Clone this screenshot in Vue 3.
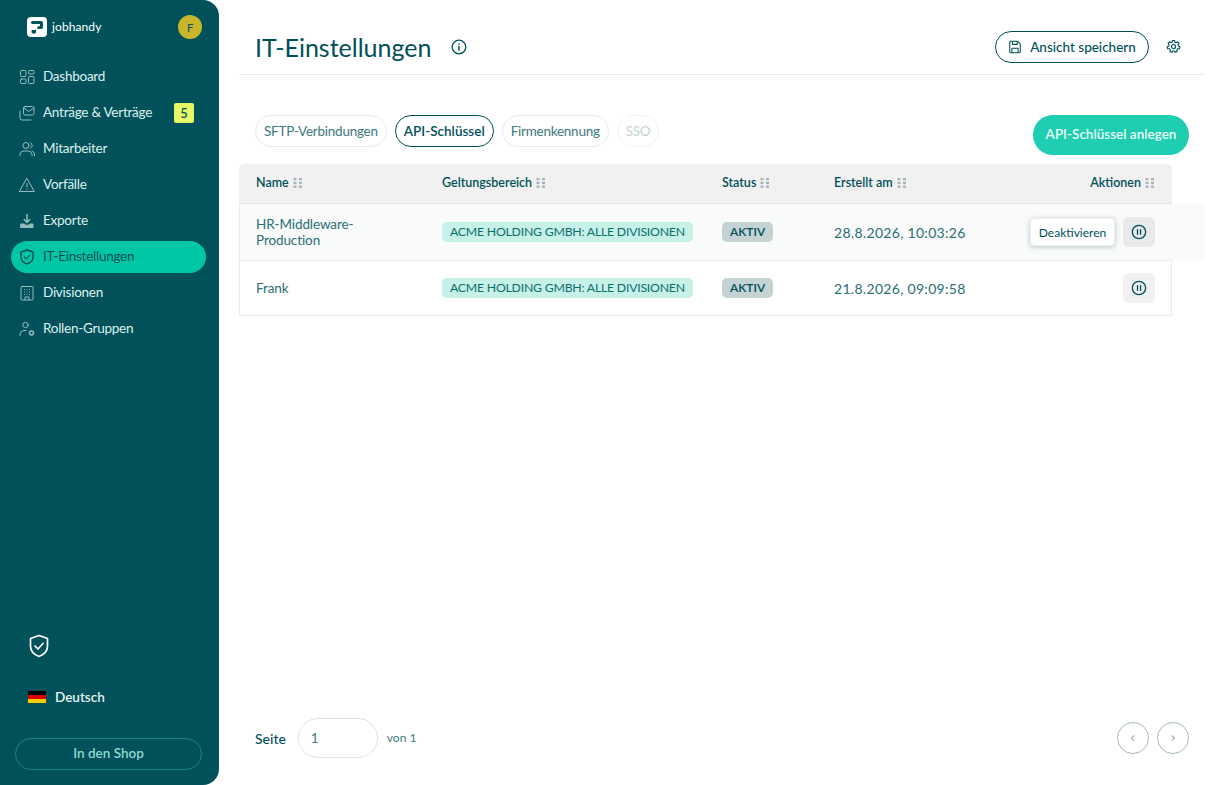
<script setup>
const nav = [
  { label: 'Dashboard', icon: 'dash' },
  { label: 'Anträge & Verträge', icon: 'mail', badge: '5' },
  { label: 'Mitarbeiter', icon: 'users' },
  { label: 'Vorfälle', icon: 'warn' },
  { label: 'Exporte', icon: 'export' },
  { label: 'IT-Einstellungen', icon: 'shield', active: true },
  { label: 'Divisionen', icon: 'building' },
  { label: 'Rollen-Gruppen', icon: 'role' },
]
const tabs = [
  { label: 'SFTP-Verbindungen' },
  { label: 'API-Schlüssel', active: true },
  { label: 'Firmenkennung' },
  { label: 'SSO', disabled: true },
]
const heads = [
  { label: 'Name' },
  { label: 'Geltungsbereich' },
  { label: 'Status' },
  { label: 'Erstellt am' },
  { label: 'Aktionen', right: true },
]
const rows = [
  { name: 'HR-Middleware-\nProduction', date: '28.8.2026, 10:03:26', hover: true },
  { name: 'Frank', date: '21.8.2026, 09:09:58', hover: false },
]
</script>

<template>
  <div class="app">
    <aside class="side">
      <div class="brand">
        <div class="logo-wrap">
          <svg class="logo" viewBox="0 0 20 20">
            <rect width="20" height="20" rx="4" fill="#fff" />
            <path d="M5.500 4H14a2 2 0 0 1 2 2v4a2 2 0 0 1-2 2h-3.500V9.300H13V7H5.500a1.500 1.500 0 0 1 0-3z" fill="#00515a" />
            <path d="M5.500 13H9v2a1.500 1.500 0 0 1-1.500 1.500H6A1.500 1.500 0 0 1 4.500 15v-1a1 1 0 0 1 1-1z" fill="#00515a" />
          </svg>
          <span class="logo-text">jobhandy</span>
        </div>
        <div class="avatar">F</div>
      </div>

      <nav class="nav">
        <a v-for="n in nav" :key="n.label" class="nav-item" :class="{ active: n.active }">
          <svg class="nav-ico" viewBox="0 0 16 16" fill="none" stroke="currentColor" stroke-width="1" stroke-linecap="round" stroke-linejoin="round">
            <template v-if="n.icon === 'dash'">
              <rect x="1.500" y="1.500" width="5.500" height="6" rx="1" />
              <rect x="9.500" y="1.500" width="5.500" height="3.500" rx="1" />
              <rect x="1.500" y="10" width="5.500" height="4.500" rx="1" />
              <rect x="9.500" y="7.500" width="5.500" height="7" rx="1" />
            </template>
            <template v-else-if="n.icon === 'mail'">
              <rect x="4.500" y="1.500" width="10.500" height="8.500" rx="1.500" />
              <path d="M4.800 3l5 3.500 5-3.500" />
              <path d="M1 6v7a2 2 0 0 0 2 2h9" />
            </template>
            <template v-else-if="n.icon === 'users'">
              <circle cx="7" cy="4.500" r="3" />
              <path d="M1 14.500v-1.500a4 4 0 0 1 4-3h4a4 4 0 0 1 4 3v1.500" />
              <path d="M11.500 1.800a3 3 0 0 1 0 5.400" />
              <path d="M13 10a3.500 3.500 0 0 1 2.500 3v1.500" />
            </template>
            <template v-else-if="n.icon === 'warn'">
              <path d="M8 1.500L15.300 14.500H.7z" />
              <path d="M8 6.500v3.500M8 12v.2" />
            </template>
            <template v-else-if="n.icon === 'export'">
              <path d="M8 1.500v7.500M5.200 6.500L8 9.500l2.800-3" stroke-width="1.500" />
              <path d="M2 11h3.500l1 1.200h3l1-1.200H14v3.500H2z" fill="currentColor" />
            </template>
            <template v-else-if="n.icon === 'shield'">
              <path d="M8 1l6 2v5c0 3.500-2.500 5.800-6 7-3.500-1.200-6-3.500-6-7V3z" stroke-width="1.400" />
              <path d="M5.500 8l1.800 1.800 3.300-3.400" stroke-width="1.200" />
            </template>
            <template v-else-if="n.icon === 'building'">
              <rect x="2" y="1.500" width="12" height="13.500" rx="1" />
              <path d="M5.500 4.500h.1M8 4.500h.1M10.500 4.500h.1M5.500 7h.1M8 7h.1M10.500 7h.1M5.500 9.500h.1M8 9.500h.1M10.500 9.500h.1M6 15v-3h4v3" />
            </template>
            <template v-else>
              <circle cx="6.500" cy="4" r="2.700" />
              <path d="M1 14.500V13a4 4 0 0 1 4-3.500h2" />
              <circle cx="12.500" cy="12" r="2" stroke-width="1.500" />
            </template>
          </svg>
          <span class="nav-label">{{ n.label }}</span>
          <span v-if="n.badge" class="nav-badge">{{ n.badge }}</span>
        </a>
      </nav>

      <div class="side-bottom">
        <svg class="trust" viewBox="0 0 20 24" fill="none" stroke="#fff" stroke-width="1.700" stroke-linejoin="round" stroke-linecap="round">
          <path d="M10 1.500l8.500 3v7.500c0 5-3.500 8.500-8.500 10.500C5 20.500 1.500 17 1.500 12V4.500z" />
          <path d="M6 12l3 3 5-5.500" />
        </svg>
        <div class="lang">
          <span class="flag"><i class="f1"></i><i class="f2"></i><i class="f3"></i></span>
          <span>Deutsch</span>
        </div>
        <button class="shop">In den Shop</button>
      </div>
    </aside>

    <main class="main">
      <header class="top">
        <div class="title-wrap">
          <h1>IT-Einstellungen</h1>
          <svg class="info" viewBox="0 0 16 16" fill="none" stroke="#00505a" stroke-width="1.300" stroke-linecap="round">
            <circle cx="8" cy="8" r="6.800" />
            <path d="M8 7.500v3.500M8 5v.2" stroke-width="1.500" />
          </svg>
        </div>
        <div class="top-actions">
          <button class="save">
            <svg viewBox="0 0 16 16" fill="none" stroke="#00505a" stroke-width="1.200" stroke-linejoin="round">
              <path d="M2 2.500A1 1 0 0 1 3 1.500h8l3 3V13.500a1 1 0 0 1-1 1H3a1 1 0 0 1-1-1z" />
              <path d="M5 1.500v3.500h5.500V1.500M4.500 14.500V9.500h7v5" />
            </svg>
            Ansicht speichern
          </button>
          <svg class="gear" viewBox="0 0 24 24" fill="none" stroke="#00505a" stroke-width="1.800" stroke-linejoin="round">
            <path d="M10.300 2.300h3.400l.6 2.800 1.700.8 2.500-1.400 2.300 2.600-1.600 2.300.5 1.900 2.500 1.100-.8 3.300-2.800-.1-1.200 1.500.5 2.800-3.100 1.400-1.700-2.200h-2l-1.700 2.200-3.100-1.400.5-2.800-1.200-1.500-2.800.1-.8-3.300 2.500-1.100.5-1.900-1.600-2.300 2.300-2.600 2.500 1.400 1.700-.8z" />
            <circle cx="12" cy="12" r="3.300" />
          </svg>
        </div>
      </header>

      <div class="toolbar">
        <div class="tabs">
          <button v-for="t in tabs" :key="t.label" class="tab" :class="{ on: t.active, off: t.disabled }">{{ t.label }}</button>
        </div>
        <button class="create">API-Schlüssel anlegen</button>
      </div>

      <div class="table">
        <div class="row head">
          <div v-for="h in heads" :key="h.label" class="th" :class="{ right: h.right }">
            {{ h.label }}
            <svg class="grip" viewBox="0 0 10 10" fill="#a9b5b7">
              <rect x="0.500" y="0" width="3" height="2.300" /><rect x="6" y="0" width="3" height="2.300" />
              <rect x="0.500" y="3.800" width="3" height="2.300" /><rect x="6" y="3.800" width="3" height="2.300" />
              <rect x="0.500" y="7.600" width="3" height="2.300" /><rect x="6" y="7.600" width="3" height="2.300" />
            </svg>
          </div>
        </div>
        <div v-for="r in rows" :key="r.name" class="row body" :class="{ hover: r.hover }">
          <div class="td name">{{ r.name }}</div>
          <div class="td cell"><span class="scope">ACME HOLDING GMBH: ALLE DIVISIONEN</span></div>
          <div class="td cell"><span class="status">AKTIV</span></div>
          <div class="td date">{{ r.date }}</div>
          <div class="td acts">
            <span v-if="r.hover" class="tip">Deaktivieren</span>
            <span class="pause" :class="{ pressed: r.hover }">
              <svg viewBox="0 0 18 18" fill="none" stroke="#00505a" stroke-width="1.500" stroke-linecap="round">
                <circle cx="9" cy="9" r="7.500" />
                <path d="M7.300 6.500v5M10.700 6.500v5" />
              </svg>
            </span>
          </div>
        </div>
      </div>

      <footer class="pager">
        <div class="page-left">
          <span class="seite">Seite</span>
          <div class="page-input">1</div>
          <span class="von">von 1</span>
        </div>
        <div class="page-right">
          <span class="round"><svg viewBox="0 0 10 10" fill="none" stroke="#a3b5b7" stroke-width="1.200"><path d="M6 2.500L3.500 5 6 7.500" /></svg></span>
          <span class="round"><svg viewBox="0 0 10 10" fill="none" stroke="#a3b5b7" stroke-width="1.200"><path d="M4 2.500L6.500 5 4 7.500" /></svg></span>
        </div>
      </footer>
    </main>
  </div>
</template>

<style scoped>
.app {
  display: flex;
  width: 1223px;
  height: 785px;
  overflow: hidden;
  background: #fff;
  color: #00505a;
  font-family: "Lato", "Liberation Sans", sans-serif;
}
.side {
  width: 219px;
  flex: none;
  background: #00515a;
  border-radius: 0 16px 16px 0;
  display: flex;
  flex-direction: column;
  color: #dff1ef;
}
.brand {
  display: flex;
  align-items: center;
  justify-content: space-between;
  padding: 15px 17px 0 27px;
  height: 24px;
  box-sizing: content-box;
}
.logo-wrap { display: flex; align-items: center; gap: 5px; }
.logo { width: 20px; height: 20px; }
.logo-text { color: #fff; font-size: 12px; letter-spacing: 0.1px; padding-bottom: 1px; }
.avatar {
  width: 24px;
  height: 24px;
  border-radius: 50%;
  background: #c9b52c;
  color: #00505a;
  font-size: 11px;
  display: flex;
  align-items: center;
  justify-content: center;
}
.nav {
  display: flex;
  flex-direction: column;
  gap: 4px;
  margin-top: 22px;
  padding-left: 11px;
  padding-right: 13px;
}
.nav-item {
  height: 32px;
  border-radius: 16px;
  display: flex;
  align-items: center;
  padding: 0 12px 0 8px;
  font-size: 13.500px;
  letter-spacing: -0.25px;
  position: relative;
}
.nav-ico { width: 16px; height: 16px; flex: none; color: #93bdbd; margin-right: 8px; }
.nav-item.active { background: #00c7a3; color: #00505a; }
.nav-item.active .nav-ico { color: #00505a; }
.nav-label { flex: 1; white-space: nowrap; padding-bottom: 2px; }
.nav-badge {
  width: 20px;
  height: 20px;
  background: #e8fb66;
  border-radius: 2px;
  color: #00505a;
  font-size: 13px;
  font-weight: 500;
  letter-spacing: 0;
  display: flex;
  align-items: center;
  justify-content: center;
}
.side-bottom {
  margin-top: auto;
  display: flex;
  flex-direction: column;
  padding: 0 17px 15px 15px;
}
.trust { width: 20px; height: 24px; margin-left: 14px; }
.lang {
  display: flex;
  align-items: center;
  gap: 9px;
  font-size: 13.500px;
  font-weight: 600;
  color: #e6f3f2;
  margin: 27px 0 0 13px;
  height: 24px;
}
.flag { width: 18px; height: 13px; display: flex; flex-direction: column; }
.flag i { flex: 1; display: block; }
.f1 { background: #000; }
.f2 { background: #d00; }
.f3 { background: #fc0; }
.shop {
  margin-top: 29px;
  height: 32px;
  border: 1px solid #1a8483;
  border-radius: 16px;
  background: transparent;
  color: #8ed8cf;
  font: 600 13.500px "Lato", "Liberation Sans", sans-serif;
  padding: 0 0 2px;
}
.main {
  flex: none;
  width: 966px;
  margin-left: 20px;
  display: flex;
  flex-direction: column;
}
.top {
  height: 75px;
  box-sizing: border-box;
  border-bottom: 1px solid #e8ecec;
  display: flex;
  align-items: center;
  justify-content: space-between;
  padding: 19px 24px 0 16px;
}
.title-wrap { display: flex; align-items: center; gap: 20px; }
h1 { font-size: 25px; font-weight: 400; margin: 0; white-space: nowrap; }
.info { width: 16px; height: 16px; }
.top-actions { display: flex; align-items: center; gap: 17px; }
.save {
  height: 32px;
  width: 154px;
  border: 1px solid #00505a;
  border-radius: 16px;
  background: #fff;
  color: #00505a;
  font: 500 13.500px "Lato", "Liberation Sans", sans-serif;
  display: flex;
  align-items: center;
  justify-content: center;
  gap: 8px;
  padding: 0;
}
.save svg { width: 14px; height: 14px; }
.gear { width: 15px; height: 15px; }
.toolbar {
  display: flex;
  align-items: flex-start;
  justify-content: space-between;
  padding: 40px 16px 0 16px;
}
.tabs { display: flex; gap: 8px; }
.tab {
  height: 32px;
  padding: 0 8px 1px;
  border: 1px solid #e8ecec;
  border-radius: 16px;
  background: #fff;
  color: #3d7a80;
  font: 400 13.500px "Lato", "Liberation Sans", sans-serif;
  letter-spacing: -0.25px;
  white-space: nowrap;
}
.tab.on { border-color: #00505a; color: #00505a; font-weight: 600; letter-spacing: 0; }
.tab.off { color: #c3d3d4; border-color: #f1f3f3; }
.create {
  height: 40px;
  width: 156px;
  border: 0;
  border-radius: 20px;
  background: #1fceb0;
  color: #eafbf8;
  font: 600 13.500px "Lato", "Liberation Sans", sans-serif;
  white-space: nowrap;
  padding: 0 0 2px;
}
.table {
  width: 933px;
  margin-top: 9px;
  border-left: 1px solid #e8ecec;
  border-right: 1px solid #e8ecec;
  border-radius: 6px 6px 0 0;
  box-sizing: border-box;
}
.row {
  display: grid;
  grid-template-columns: 186px 280px 112px 1fr 190px;
  align-items: center;
  position: relative;
}
.head {
  height: 40px;
  background: #f1f1f1;
  border-radius: 6px 6px 0 0;
  border-bottom: 1px solid #e2e6e6;
  margin: 0 -1px;
  padding: 0 1px 2px;
  box-sizing: border-box;
}
.th {
  padding-left: 16px;
  font-size: 12.500px;
  font-weight: 600;
  display: flex;
  align-items: center;
  gap: 4px;
  white-space: nowrap;
}
.th.right { justify-content: flex-end; padding: 0 16px 0 0; }
.grip { width: 10px; height: 10px; }
.body { border-bottom: 1px solid #e8ecec; height: 55px; box-sizing: border-box; }
.body.hover { height: 57px; background: #f9fafa; }
.body.hover::after {
  content: "";
  position: absolute;
  left: 100%;
  top: 0;
  bottom: -1px;
  width: 34px;
  background: #f9fafa;
}
.td { padding-left: 16px; font-size: 13.500px; color: #2a6f76; }
.cell { display: flex; align-items: center; }
.name { white-space: pre-line; line-height: 16px; letter-spacing: -0.1px; }
.scope {
  display: block;
  background: #c5f1e9;
  border-radius: 5px;
  height: 20px;
  line-height: 19px;
  padding: 0 8px;
  font-size: 12.300px;
  letter-spacing: -0.24px;
  color: #0b6f6b;
  white-space: nowrap;
}
.status {
  display: block;
  background: #c4d2d4;
  border-radius: 5px;
  height: 20px;
  line-height: 19px;
  padding: 0 8px;
  font-size: 12px;
  font-weight: 600;
  color: #00505a;
}
.date { letter-spacing: 0.3px; font-size: 14px; }
.acts {
  padding: 0 16px 0 0;
  display: flex;
  justify-content: flex-end;
  align-items: center;
  gap: 8px;
}
.tip {
  height: 28px;
  width: 85px;
  box-sizing: border-box;
  border: 1px solid #eef1f1;
  border-radius: 4px;
  background: #fff;
  box-shadow: 0 1px 5px rgba(0, 40, 45, 0.25);
  font-size: 12px;
  color: #00505a;
  display: flex;
  align-items: center;
  justify-content: center;
}
.pause {
  width: 32px;
  height: 30px;
  border-radius: 6px;
  background: #f1f1f1;
  display: flex;
  align-items: center;
  justify-content: center;
}
.pause.pressed { background: #e9e9e9; }
.pause svg { width: 16px; height: 16px; }
.pager {
  margin-top: auto;
  height: 40px;
  margin-bottom: 27px;
  display: flex;
  align-items: center;
  justify-content: space-between;
  padding: 0 16px;
}
.page-left { display: flex; align-items: center; }
.seite { font-size: 14px; font-weight: 500; margin-right: 12px; }
.page-input {
  width: 80px;
  height: 40px;
  box-sizing: border-box;
  border: 1px solid #dde1e1;
  border-radius: 20px;
  display: flex;
  align-items: center;
  padding-left: 12px;
  font-size: 13.500px;
  color: #3d7a80;
  margin-right: 9px;
  padding-bottom: 1px;
}
.von { font-size: 12px; color: #3d7a80; padding-bottom: 1px; }
.page-right { display: flex; gap: 8px; }
.round {
  width: 32px;
  height: 32px;
  box-sizing: border-box;
  border: 1px solid #a9bcbe;
  border-radius: 50%;
  display: flex;
  align-items: center;
  justify-content: center;
}
.round svg { width: 10px; height: 10px; }
</style>
